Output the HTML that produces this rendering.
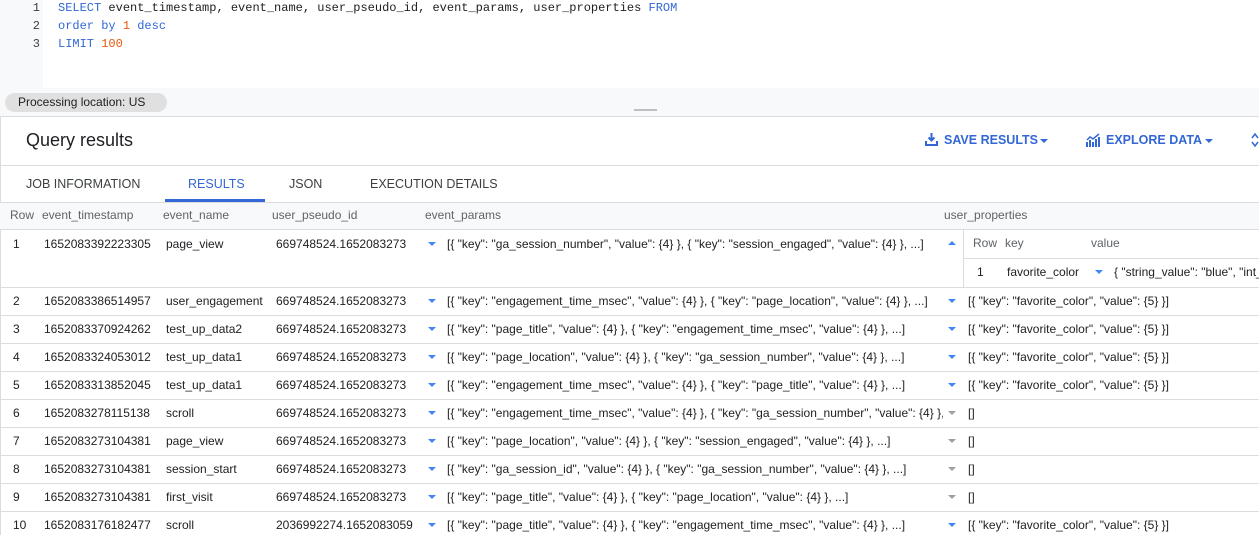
<!DOCTYPE html>
<html><head><meta charset="utf-8"><style>
*{margin:0;padding:0;box-sizing:border-box}
html,body{width:1259px;height:535px;overflow:hidden}
body{background:#fff;font-family:"Liberation Sans",Arial,sans-serif;color:#202124}
#w{position:relative;width:1259px;height:535px;overflow:hidden}
.a{position:absolute;white-space:nowrap}
.code{font-family:"Liberation Mono",monospace;font-size:12px;color:#202124}
.kw{color:#3367d6}.num{color:#e8590c}
.ln{position:absolute;left:0;width:43px;text-align:right;padding-right:3px;font-family:"Liberation Mono",monospace;font-size:12px;color:#3c4043}
.hl{position:absolute;left:0;width:1259px;height:1px;background:#dadce0}
.t{font-size:12px;color:#202124}
.h{font-size:12px;color:#5f6368}
.tab{font-size:12.5px;color:#3c4043}
.ar{position:absolute;width:0;height:0;border-left:4px solid transparent;border-right:4px solid transparent;border-top:4px solid #4285f4}
.ag{border-top-color:#9aa0a6}
.btn{color:#3367d6;font-size:12.5px;font-weight:bold}
</style></head><body><div id="w">
<div class="a" style="left:0;top:0;width:43px;height:88px;background:#f8f9fa"></div>
<div class="a" style="left:0;top:88px;width:1259px;height:28px;background:#f8f9fa"></div>
<div class="ln" style="top:1px">1</div><div class="ln" style="top:19px">2</div><div class="ln" style="top:37px">3</div>
<div class="a code" style="left:58px;top:1px"><span class="kw">SELECT</span> event_timestamp, event_name, user_pseudo_id, event_params, user_properties <span class="kw">FROM</span></div>
<div class="a code" style="left:58px;top:19px"><span class="kw">order by</span> <span class="num">1</span> <span class="kw">desc</span></div>
<div class="a code" style="left:58px;top:37px"><span class="kw">LIMIT</span> <span class="num">100</span></div>
<div class="a" style="left:5px;top:93px;width:162px;height:19px;border-radius:10px;background:#e0e0e0;font-size:12px;line-height:19px;padding-left:13px">Processing location: US</div>
<div class="a" style="left:634px;top:109px;width:23px;height:2px;background:#bdc1c6"></div>
<div class="hl" style="top:116px"></div>
<div class="a" style="left:0;top:116px;width:1px;height:419px;background:#dadce0"></div>
<div class="a" style="left:26px;top:130px;font-size:18px;color:#202124">Query results</div>
<svg class="a" style="left:925px;top:133px" width="13" height="13" viewBox="0 0 13 13"><path d="M6.5 0v7M3.5 4.5l3 3 3-3" stroke="#3367d6" stroke-width="2" fill="none"/><path d="M1 8v4h11V8" stroke="#3367d6" stroke-width="2" fill="none"/></svg>
<div class="a btn" style="left:944px;top:133px">SAVE RESULTS</div>
<div class="ar" style="left:1040px;top:139px;border-top-color:#3367d6"></div>
<svg class="a" style="left:1086px;top:133px" width="15" height="14" viewBox="0 0 15 14"><path d="M1 14V9M4 14V7M7 14V9M10 14V6M13 14V4" stroke="#3367d6" stroke-width="2"/><path d="M1 7l3-3 3 2 6-5" stroke="#3367d6" stroke-width="1.5" fill="none"/></svg>
<div class="a btn" style="left:1106px;top:133px">EXPLORE DATA</div>
<div class="ar" style="left:1205px;top:139px;border-top-color:#3367d6"></div>
<svg class="a" style="left:1251px;top:132px" width="8" height="16"><path d="M1 6l3-4 3 4M1 10l3 4 3-4" stroke="#3367d6" stroke-width="1.5" fill="none"/></svg>
<div class="hl" style="top:165px"></div>
<div class="a tab" style="left:26px;top:177px">JOB INFORMATION</div>
<div class="a tab" style="left:188px;top:177px;color:#3367d6">RESULTS</div>
<div class="a" style="left:165px;top:199px;width:100px;height:3px;background:#3367d6"></div>
<div class="a tab" style="left:289px;top:177px">JSON</div>
<div class="a tab" style="left:370px;top:177px">EXECUTION DETAILS</div>
<div class="hl" style="top:202px"></div>
<div class="a" style="left:0;top:203px;width:1259px;height:26px;background:#f8f9fa"></div>
<div class="a h" style="left:10px;top:208px">Row</div>
<div class="a h" style="left:42px;top:208px">event_timestamp</div>
<div class="a h" style="left:163px;top:208px">event_name</div>
<div class="a h" style="left:272px;top:208px">user_pseudo_id</div>
<div class="a h" style="left:425px;top:208px">event_params</div>
<div class="a h" style="left:944px;top:208px">user_properties</div>
<div class="hl" style="top:229px"></div>
<div class="a t" style="left:13px;top:237px">1</div>
<div class="a t" style="left:44px;top:237px">1652083392223305</div>
<div class="a t" style="left:166px;top:237px">page_view</div>
<div class="a t" style="left:276px;top:237px">669748524.1652083273</div>
<div class="ar" style="left:428px;top:242px"></div>
<div class="a t" style="left:447px;top:237px">[{ "key": "ga_session_number", "value": {4} }, { "key": "session_engaged", "value": {4} }, ...]</div>
<div class="ar" style="left:948px;top:241px;border-top:0;border-bottom:4px solid #4285f4"></div>
<div class="a" style="left:963px;top:229px;width:1px;height:58px;background:#dadce0"></div>
<div class="a h" style="left:973px;top:236px">Row</div><div class="a h" style="left:1005px;top:236px">key</div><div class="a h" style="left:1091px;top:236px">value</div>
<div class="a" style="left:964px;top:258px;width:295px;height:1px;background:#dadce0"></div>
<div class="a t" style="left:977px;top:265px">1</div>
<div class="a t" style="left:1007px;top:265px">favorite_color</div>
<div class="ar" style="left:1095px;top:270px"></div>
<div class="a t" style="left:1114px;top:265px;width:145px;overflow:hidden">{ "string_value": "blue", "int_value": null }</div>
<div class="hl" style="top:287px"></div>
<div id="rows"></div>
</div>
<script>
var d=[["2","1652083386514957","user_engagement","669748524.1652083273",'[{ "key": "engagement_time_msec", "value": {4} }, { "key": "page_location", "value": {4} }, ...]',1],
["3","1652083370924262","test_up_data2","669748524.1652083273",'[{ "key": "page_title", "value": {4} }, { "key": "engagement_time_msec", "value": {4} }, ...]',1],
["4","1652083324053012","test_up_data1","669748524.1652083273",'[{ "key": "page_location", "value": {4} }, { "key": "ga_session_number", "value": {4} }, ...]',1],
["5","1652083313852045","test_up_data1","669748524.1652083273",'[{ "key": "engagement_time_msec", "value": {4} }, { "key": "page_title", "value": {4} }, ...]',1],
["6","1652083278115138","scroll","669748524.1652083273",'[{ "key": "engagement_time_msec", "value": {4} }, { "key": "ga_session_number", "value": {4} }, ...]',0],
["7","1652083273104381","page_view","669748524.1652083273",'[{ "key": "page_location", "value": {4} }, { "key": "session_engaged", "value": {4} }, ...]',0],
["8","1652083273104381","session_start","669748524.1652083273",'[{ "key": "ga_session_id", "value": {4} }, { "key": "ga_session_number", "value": {4} }, ...]',0],
["9","1652083273104381","first_visit","669748524.1652083273",'[{ "key": "page_title", "value": {4} }, { "key": "page_location", "value": {4} }, ...]',0],
["10","1652083176182477","scroll","2036992274.1652083059",'[{ "key": "page_title", "value": {4} }, { "key": "engagement_time_msec", "value": {4} }, ...]',1]];
var h="";d.forEach(function(r,i){var y=287+28*i,ty=y+7;
h+='<div class="a t" style="left:13px;top:'+ty+'px">'+r[0]+'</div><div class="a t" style="left:44px;top:'+ty+'px">'+r[1]+'</div><div class="a t" style="left:166px;top:'+ty+'px">'+r[2]+'</div><div class="a t" style="left:276px;top:'+ty+'px">'+r[3]+'</div><div class="ar" style="left:428px;top:'+(y+12)+'px"></div><div class="a t" style="left:447px;top:'+ty+'px;width:496px;overflow:hidden">'+r[4]+'</div><div class="ar'+(r[5]?'':' ag')+'" style="left:948px;top:'+(y+12)+'px"></div><div class="a t" style="left:968px;top:'+ty+'px">'+(r[5]?'[{ "key": "favorite_color", "value": {5} }]':'[]')+'</div><div class="hl" style="top:'+(y+28)+'px"></div>';});
document.getElementById("rows").innerHTML=h;
</script>
</body></html>
